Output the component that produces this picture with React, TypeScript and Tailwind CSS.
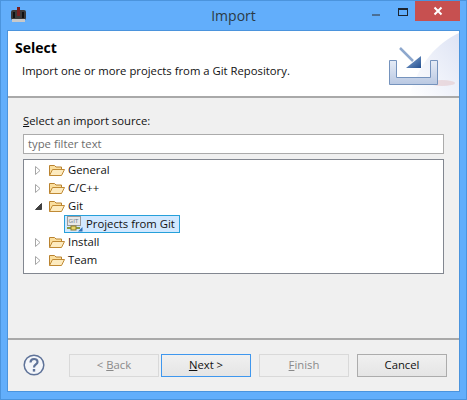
const font = "font-['Open_Sans','Liberation_Sans',sans-serif]";

const rows = [
  { label: "General", open: false },
  { label: "C/C++", open: false },
  { label: "Git", open: true },
  { label: "Install", open: false },
  { label: "Team", open: false },
];

function Folder() {
  return (
    <svg width="16" height="13" viewBox="0 0 16 13" className="shrink-0">
      <path d="M0.5 11.5V1.5H5.5L7 3H12.5V5" fill="#fbdf9f" stroke="#b9822f" />
      <path d="M0.5 11.5L3.5 5.5H15.5L12.5 11.5Z" fill="#fdebc0" stroke="#c08a35" />
    </svg>
  );
}

function Arrow({ open }: { open: boolean }) {
  return open ? (
    <svg width="7" height="7" viewBox="0 0 7 7" className="shrink-0">
      <path d="M0.5 6.5H6.5V0.5Z" fill="#404040" stroke="#404040" />
    </svg>
  ) : (
    <svg width="6" height="9" viewBox="0 0 6 9" className="shrink-0">
      <path d="M0.5 0.5L5 4.5L0.5 8.5Z" fill="#fff" stroke="#a6a6a6" />
    </svg>
  );
}

function GitIcon() {
  return (
    <svg width="16" height="16" viewBox="0 0 16 16" className="shrink-0">
      <rect x="0.5" y="0.5" width="13" height="9" fill="#e8e8e8" stroke="#9a9a9a" />
      <text x="1.5" y="7" fontSize="6" fontFamily="Liberation Sans, sans-serif" fill="#6f7f90">GIT</text>
      <path d="M0 12H13" stroke="#8a9a3f" strokeWidth="2" />
      <rect x="4" y="10" width="5" height="4" fill="#e9d66b" stroke="#8a7a2f" />
      <path d="M15.5 11V15.5H11Z" fill="#2f6fb5" />
    </svg>
  );
}

function TreeRow({ label, open }: { label: string; open: boolean }) {
  return (
    <div className="flex h-[18px] items-center pl-[11px] text-[11.3px] text-[#111]">
      <div className="flex w-[14px] justify-start">
        <Arrow open={open} />
      </div>
      <Folder />
      <span className="ml-[3px]">{label}</span>
    </div>
  );
}

function DialogButton({
  before,
  mnemonic,
  after,
  disabled,
  focused,
}: {
  before?: string;
  mnemonic?: string;
  after?: string;
  disabled?: boolean;
  focused?: boolean;
}) {
  const tone = disabled
    ? "border-[#d9d9d9] bg-[#efefef] text-[#8a8a8a]"
    : focused
      ? "border-[#3f97ee] bg-gradient-to-b from-[#f0f0f0] to-[#e5e5e5] text-[#111]"
      : "border-[#acacac] bg-gradient-to-b from-[#f0f0f0] to-[#e5e5e5] text-[#111]";
  return (
    <div className={`flex h-[23px] w-[90px] items-center justify-center whitespace-pre border text-[11.3px] ${tone}`}>
      {before}
      {mnemonic && <span className="underline">{mnemonic}</span>}
      {after}
    </div>
  );
}

export default function App() {
  return (
    <div className={`flex h-[400px] w-[467px] flex-col overflow-hidden border border-[#4b94dd] bg-[#62aefb] ${font}`}>
      <div className="grid h-[29px] shrink-0 grid-cols-[1fr_auto_1fr]">
        <div className="flex items-start pl-[9px] pt-[6px]">
          <svg width="17" height="16" viewBox="0 0 17 16">
            <rect x="1" y="3" width="15" height="10" rx="2" fill="#3a3a3a" />
            <rect x="7" y="0" width="3" height="9" fill="#7a1f1f" />
            <rect x="3" y="5" width="2" height="6" fill="#111" />
            <rect x="12" y="5" width="2" height="6" fill="#111" />
            <rect x="2" y="12" width="13" height="3" fill="#c9c9c9" />
          </svg>
        </div>
        <div className="pt-[5px] text-[14px] leading-[20px] text-[#2b3a45]">Import</div>
        <div className="flex items-start justify-end pr-[6px]">
          <div className="mt-[13px] h-[2px] w-[8px] bg-[#4a6f96]" />
          <div className="ml-[18px] mt-[7px] h-[8px] w-[10px] border border-t-2 border-[#1c2530]" />
          <div className="ml-[7px] flex h-[20px] w-[45px] items-center justify-center bg-[#c75050]">
            <svg width="10" height="10" viewBox="0 0 10 10">
              <path d="M1.5 1.5L8.5 8.5M8.5 1.5L1.5 8.5" stroke="#fff" strokeWidth="2" />
            </svg>
          </div>
        </div>
      </div>

      <div className="mx-[6px] flex flex-1 flex-col border border-[#4b94dd] bg-[#f0f0f0] text-[#111]">
        <div className="relative h-[67px] shrink-0 overflow-hidden border-b-2 border-[#a9a9a9] bg-white">
          <div className="pl-[7px] pt-[7px] text-[14px] font-bold leading-[20px] text-black">Select</div>
          <div className="pl-[14px] pt-[4px] text-[11.3px] leading-[18px]">Import one or more projects from a Git Repository.</div>
          <svg width="72" height="65" viewBox="0 0 72 65" className="absolute right-0 top-0">
            <defs>
              <linearGradient id="wash" x1="0" y1="1" x2="1" y2="0">
                <stop offset="0" stopColor="#fff" />
                <stop offset="1" stopColor="#dde3f4" />
              </linearGradient>
              <linearGradient id="tray" x1="0" y1="0" x2="0" y2="1">
                <stop offset="0" stopColor="#e6ecf6" />
                <stop offset="1" stopColor="#b9c8e2" />
              </linearGradient>
              <linearGradient id="head" x1="0" y1="0" x2="1" y2="1">
                <stop offset="0" stopColor="#8fb0d8" />
                <stop offset="1" stopColor="#234f90" />
              </linearGradient>
            </defs>
            <path d="M72 2V65H22C32 32 50 12 72 2Z" fill="url(#wash)" />
            <ellipse cx="55" cy="52" rx="13" ry="3" fill="#e6cfd3" opacity="0.7" />
            <path d="M2.5 29.5H9.5V46.5H43.5V29.5H50.5V53.5H2.5Z" fill="url(#tray)" stroke="#7593bd" />
            <path d="M13 17L26 30" stroke="#8ea8cd" strokeWidth="2.5" />
            <path d="M34 25V37H19Z" fill="url(#head)" />
          </svg>
        </div>

        <div className="flex flex-1 flex-col px-[15px] pt-[14px]">
          <div className="text-[11.3px] leading-[18px]">
            <span className="underline">S</span>elect an import source:
          </div>
          <div className="mt-[4px] flex h-[20px] w-[421px] items-center border border-[#ababab] bg-white pl-[4px] text-[11.3px] text-[#6d6d6d]">
            type filter text
          </div>
          <div className="mt-[5px] h-[115px] w-[421px] border border-[#828790] bg-white pt-[1px]">
            {rows.map((row) => (
              <div key={row.label}>
                <TreeRow label={row.label} open={row.open} />
                {row.label === "Git" && (
                  <div className="flex h-[18px] items-center pl-[40px]">
                    <div className="flex h-[18px] w-[116px] items-center gap-[3px] whitespace-nowrap border border-[#26a0da] bg-[#d1e8ff] pl-[2px] text-[11.3px] text-[#111]">
                      <GitIcon />
                      <span>Projects from Git</span>
                    </div>
                  </div>
                )}
              </div>
            ))}
          </div>
        </div>

        <div className="flex h-[53px] shrink-0 items-start border-t-2 border-[#a9a9a9] pt-[14px]">
          <svg width="22" height="22" viewBox="0 0 22 22" className="ml-[15px] shrink-0">
            <circle cx="11" cy="11" r="9.8" fill="#f4f6fa" stroke="#5f7399" strokeWidth="1.5" />
            <path d="M7.5 8.5C7.5 3.8 14.5 4 14.5 8C14.5 10.5 11 10.5 11 13.5" fill="none" stroke="#5f7399" strokeWidth="2.2" />
            <rect x="9.8" y="15" width="2.4" height="2.6" fill="#5f7399" />
          </svg>
          <div className="ml-[24px] flex">
            <DialogButton before="< " mnemonic="B" after="ack" disabled />
            <div className="ml-[2px]">
              <DialogButton mnemonic="N" after="ext >" focused />
            </div>
            <div className="ml-[8px]">
              <DialogButton mnemonic="F" after="inish" disabled />
            </div>
            <div className="ml-[8px]">
              <DialogButton before="Cancel" />
            </div>
          </div>
        </div>
      </div>
      <div className="h-[7px] shrink-0" />
    </div>
  );
}
